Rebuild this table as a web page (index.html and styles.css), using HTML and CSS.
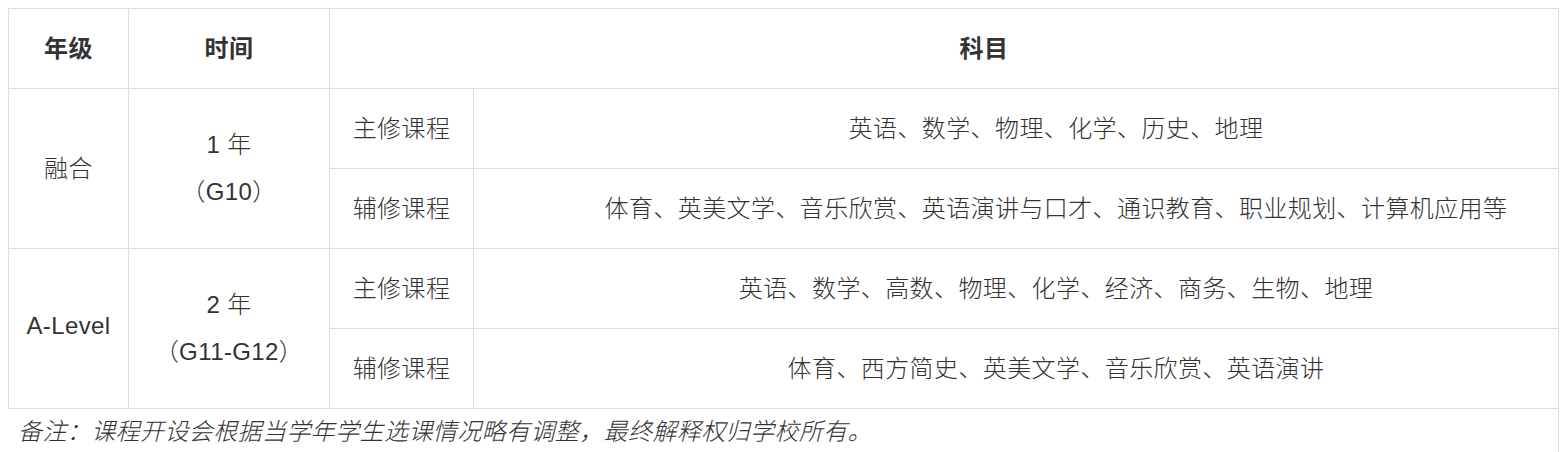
FILE: index.html
```html
<!DOCTYPE html>
<html lang="zh-CN">
<head>
<meta charset="utf-8">
<title>课程设置</title>
<link rel="stylesheet" href="styles.css">
</head>
<body>
<div class="wrap">
  <table class="course">
    <colgroup>
      <col class="c-grade">
      <col class="c-time">
      <col class="c-type">
      <col class="c-subj">
    </colgroup>
    <thead>
      <tr>
        <th>年级</th>
        <th>时间</th>
        <th colspan="2">科目</th>
      </tr>
    </thead>
    <tbody>
      <tr>
        <td rowspan="2">融合</td>
        <td rowspan="2" class="span-cell"><div class="two"><span>1 年</span><span>（G10）</span></div></td>
        <td>主修课程</td>
        <td>英语、数学、物理、化学、历史、地理</td>
      </tr>
      <tr>
        <td>辅修课程</td>
        <td>体育、英美文学、音乐欣赏、英语演讲与口才、通识教育、职业规划、计算机应用等</td>
      </tr>
      <tr>
        <td rowspan="2">A-Level</td>
        <td rowspan="2" class="span-cell"><div class="two"><span>2 年</span><span>（G11-G12）</span></div></td>
        <td>主修课程</td>
        <td>英语、数学、高数、物理、化学、经济、商务、生物、地理</td>
      </tr>
      <tr>
        <td>辅修课程</td>
        <td>体育、西方简史、英美文学、音乐欣赏、英语演讲</td>
      </tr>
    </tbody>
  </table>
  <p class="note">备注：课程开设会根据当学年学生选课情况略有调整，最终解释权归学校所有。</p>
</div>
</body>
</html>
```
FILE: styles.css
```css
html, body {
  margin: 0;
  padding: 0;
  background: #fff;
}
body {
  padding: 8px 0 0 8px;
  height: 452px;
  box-sizing: border-box;
  overflow: hidden;
  font-family: "Liberation Sans", "Noto Sans CJK SC", sans-serif;
  color: #333;
}
.wrap {
  width: 1550px;
  height: 444px;
  overflow: hidden;
  border-right: 1px solid #dcdcdc;
}
.course {
  border-collapse: collapse;
  table-layout: fixed;
  width: 1630px;
  font-size: 24px;
  font-weight: 300;
}
.c-grade { width: 120px; }
.c-time { width: 201px; }
.c-type { width: 144px; }
.c-subj { width: 1165px; }
.course th,
.course td {
  border: 1px solid #dcdcdc;
  padding: 0 0 5px 0;
  height: 74px;
  text-align: center;
  vertical-align: middle;
  letter-spacing: 0.4px;
}
.course td.span-cell {
  padding: 0;
}
.course th {
  font-weight: 700;
  color: #333;
}
.two {
  display: flex;
  flex-direction: column;
  align-items: center;
  gap: 11px;
  line-height: 36px;
}
.note {
  margin: 0;
  padding: 5px 0 0 10px;
  font-size: 24px;
  line-height: 36px;
  font-style: italic;
  font-weight: 300;
  letter-spacing: 0.4px;
  color: #333;
}
```
